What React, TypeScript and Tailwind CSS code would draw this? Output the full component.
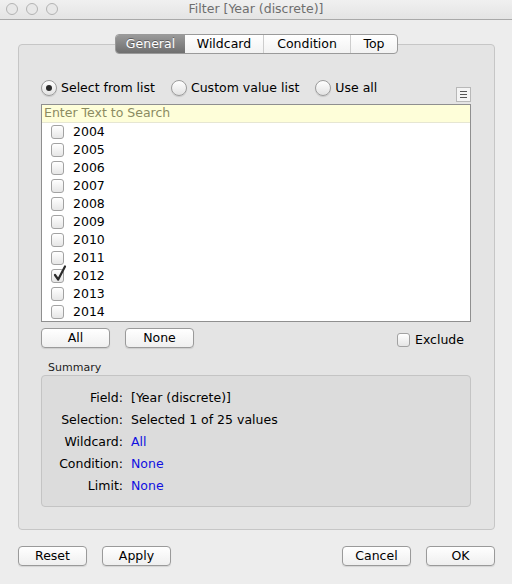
import React from "react"

const font = { fontFamily: '"DejaVu Sans", "Liberation Sans", sans-serif' }

const years = ["2004", "2005", "2006", "2007", "2008", "2009", "2010", "2011", "2012", "2013", "2014"]

const Radio = ({ checked = false, label }: { checked?: boolean; label: string }) => (
  <label className="flex items-center gap-[4px]">
    <span className="flex h-[16px] w-[16px] items-center justify-center rounded-full border border-[#9c9c9c] bg-gradient-to-b from-white to-[#e2e2e2] shadow-[0_1px_1px_rgba(0,0,0,0.12)]">
      {checked && <span className="h-[6px] w-[6px] rounded-full bg-[#2a2a2a]" />}
    </span>
    <span className="text-[12.5px] leading-none text-black">{label}</span>
  </label>
)

const Check = ({ checked = false }: { checked?: boolean }) => (
  <span className="relative block h-[14px] w-[13px] rounded-[3px] border border-[#a2a2a2] bg-gradient-to-b from-white to-[#e6e6e6]">
    {checked && (
      <svg className="absolute -top-[5px] left-[1px] h-[17px] w-[14px]" viewBox="0 0 14 17" fill="none">
        <path d="M2 10 L5.2 14.5 L12 1.5" stroke="#2b2b2b" strokeWidth="2.2" strokeLinecap="round" strokeLinejoin="round" />
      </svg>
    )}
  </span>
)

const Button = ({ children }: { children: React.ReactNode }) => (
  <button className="flex h-[20px] w-[69px] items-center justify-center rounded-[4px] border border-[#9a9a9a] bg-gradient-to-b from-white to-[#efefef] text-[12.5px] leading-none text-black shadow-[0_1px_1px_rgba(0,0,0,0.1)]">
    {children}
  </button>
)

const Row = ({ label, value, link = false }: { label: string; value: string; link?: boolean }) => (
  <div className="flex h-[22px] items-center">
    <span className="w-[81px] text-right text-[12.5px] text-black">{label}</span>
    <span className={`ml-[8px] text-[12.5px] ${link ? "text-[#1010e0]" : "text-black"}`}>{value}</span>
  </div>
)

export default function App() {
  return (
    <div className="h-[584px] w-[512px] overflow-hidden bg-[#ededed]" style={font}>
      {/* title bar */}
      <div className="relative flex h-[20px] items-center justify-center border-b border-[#a9a9a9] bg-gradient-to-b from-[#f0f0f0] to-[#e4e4e4]">
        <div className="absolute left-[6px] top-[3px] flex gap-[8px]">
          <span className="h-[12px] w-[12px] rounded-full border border-[#b3b3b3] bg-[#e8e8e8]" />
          <span className="h-[12px] w-[12px] rounded-full border border-[#b3b3b3] bg-[#e8e8e8]" />
          <span className="h-[12px] w-[12px] rounded-full border border-[#b3b3b3] bg-[#e8e8e8]" />
        </div>
        <span className="text-[12.5px] text-[#6e6e6e]">Filter [Year (discrete)]</span>
      </div>

      {/* tabs */}
      <div className="relative z-10 mt-[14px] flex justify-center pl-[1px]">
        <div className="flex h-[20px] overflow-hidden rounded-[4px] border border-[#9a9a9a] bg-gradient-to-b from-white to-[#f2f2f2] text-[12.5px] leading-none">
          <span className="flex w-[69px] items-center justify-center bg-gradient-to-b from-[#9a9a9a] to-[#6f6f6f] text-white [text-shadow:0_-1px_0_rgba(0,0,0,0.35)]">General</span>
          <span className="flex w-[79px] items-center justify-center border-r border-[#cdcdcd] text-black">Wildcard</span>
          <span className="flex w-[87px] items-center justify-center border-r border-[#cdcdcd] text-black">Condition</span>
          <span className="flex w-[46px] items-center justify-center text-black">Top</span>
        </div>
      </div>

      {/* group box */}
      <div className="-mt-[10px] ml-[18px] h-[486px] w-[477px] rounded-[4px] border border-[#c6c6c6] bg-[#e4e4e4] pl-[22px] pt-[35px]">
        <div className="flex h-[23px] w-[430px] justify-between">
          <div className="flex h-[16px] items-center gap-[16px]">
            <Radio checked label="Select from list" />
            <Radio label="Custom value list" />
            <Radio label="Use all" />
          </div>
          <div className="mb-[1px] flex h-[15px] w-[15px] flex-col items-center justify-center gap-[2px] self-end border border-[#b8b8b8] bg-[#f4f4f4]">
            <span className="h-[1px] w-[7px] bg-[#555]" />
            <span className="h-[1px] w-[7px] bg-[#555]" />
            <span className="h-[1px] w-[7px] bg-[#555]" />
          </div>
        </div>

        {/* list */}
        <div className="mt-[1px] h-[218px] w-[430px] border border-[#8f8f8f] bg-white">
          <div className="flex h-[18px] items-center border-b border-[#e6e6d2] bg-[#fefed9] pl-[2px] text-[12.5px] text-[#8b8b62]">
            Enter Text to Search
          </div>
          {years.map((y) => (
            <div key={y} className="flex h-[18px] items-center pl-[9px]">
              <Check checked={y === "2012"} />
              <span className="ml-[9px] text-[12.5px] leading-none text-black">{y}</span>
            </div>
          ))}
        </div>

        <div className="mt-[6px] flex w-[430px] items-start">
          <Button>All</Button>
          <div className="ml-[15px]">
            <Button>None</Button>
          </div>
          <div className="ml-auto mt-[5px] flex items-center gap-[5px] pr-[7px]">
            <Check />
            <span className="text-[12.5px] leading-none text-black">Exclude</span>
          </div>
        </div>

        <div className="ml-[7px] mt-[14px] text-[11px] leading-none text-[#222]">Summary</div>
        <div className="mt-[2px] h-[132px] w-[430px] rounded-[4px] border border-[#c4c4c4] bg-[#dcdcdc] pt-[11px]">
          <Row label="Field:" value="[Year (discrete)]" />
          <Row label="Selection:" value="Selected 1 of 25 values" />
          <Row label="Wildcard:" value="All" link />
          <Row label="Condition:" value="None" link />
          <Row label="Limit:" value="None" link />
        </div>
      </div>

      {/* footer buttons */}
      <div className="ml-[18px] mt-[16px] flex w-[477px]">
        <Button>Reset</Button>
        <div className="ml-[15px]">
          <Button>Apply</Button>
        </div>
        <div className="ml-auto">
          <Button>Cancel</Button>
        </div>
        <div className="ml-[15px]">
          <Button>OK</Button>
        </div>
      </div>
    </div>
  )
}
